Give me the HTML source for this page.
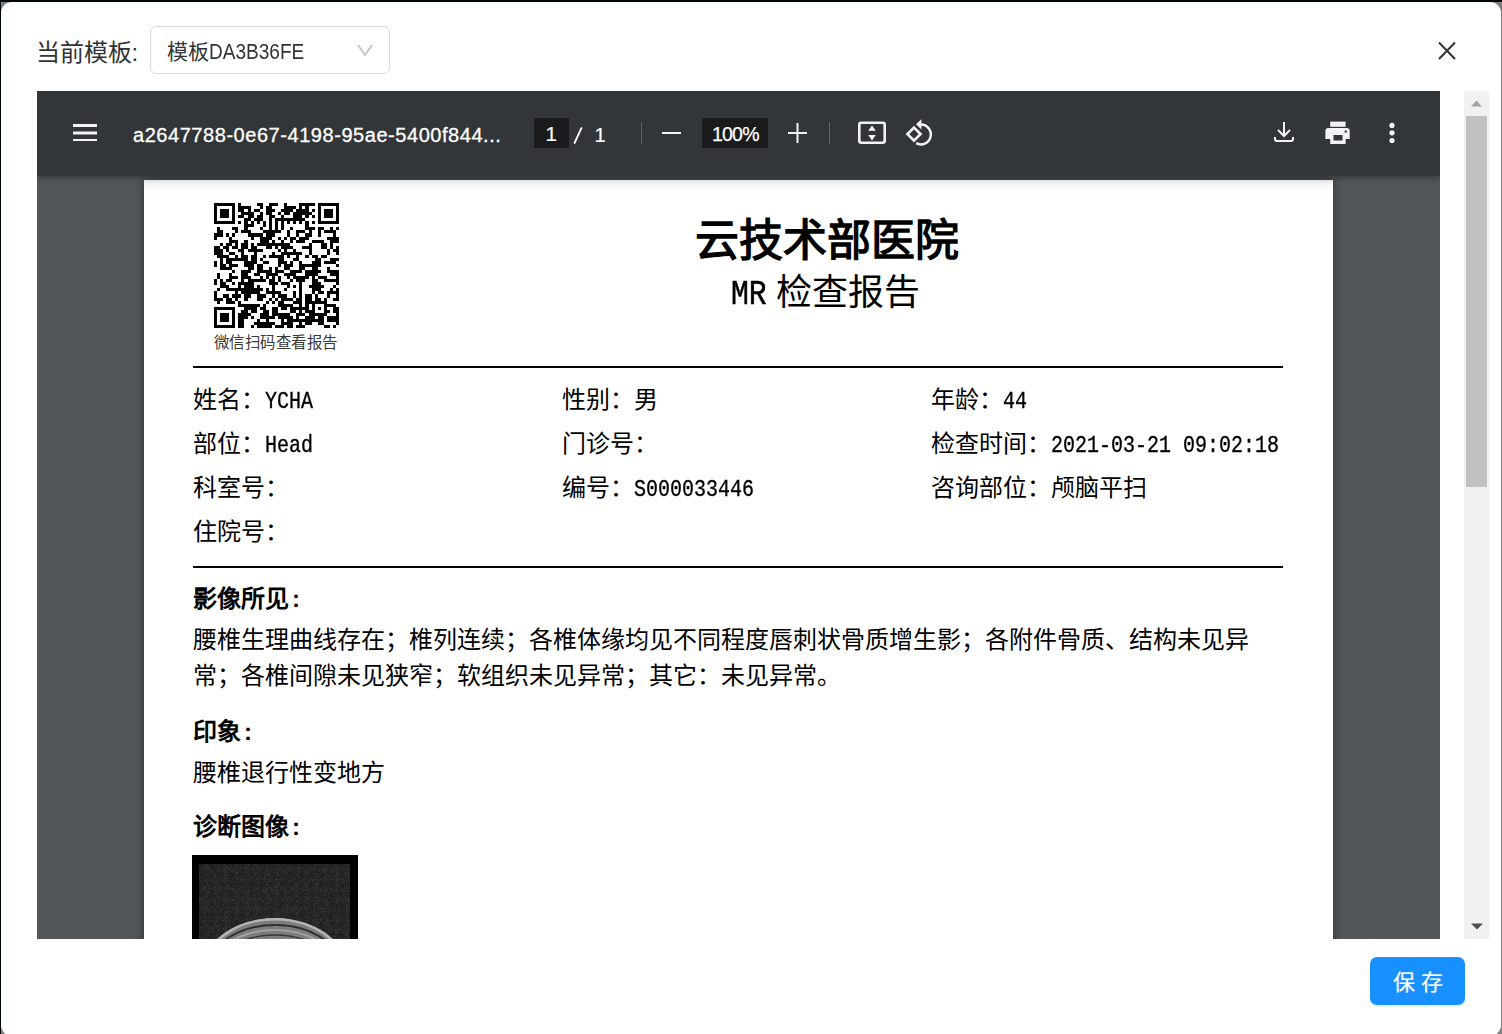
<!DOCTYPE html>
<html lang="zh-CN"><head><meta charset="utf-8">
<style>
*{margin:0;padding:0;box-sizing:border-box}
html,body{width:1502px;height:1034px;overflow:hidden}
body{background:#7f7f7f;font-family:"Liberation Sans",sans-serif;position:relative}
.abs{position:absolute}
#topstrip{left:0;top:0;width:1502px;height:1.5px;background:#00050f}
#leftstrip{left:0;top:0;width:1px;height:1034px;background:#00050f}
#modal{left:1px;top:2px;width:1500px;height:1034px;background:#fff;border-radius:11px}
#lbl{left:35.5px;top:34.5px;font-size:24px;line-height:36px;color:#333;white-space:nowrap}
#sel{left:150px;top:26px;width:240px;height:48px;border:1px solid #d9d9d9;border-radius:6px;background:#fff}
#seltxt{left:167px;top:36px;font-size:21px;line-height:32px;color:#333;white-space:nowrap}
#seltxt .lat{display:inline-block;font-size:22px;transform:scaleX(.865);transform-origin:0 50%;vertical-align:top;margin-top:0px}
#close{left:1436px;top:39px}
#viewer{left:37px;top:91px;width:1403px;height:848px;background:#525659;overflow:hidden}
#toolbar{left:0;top:0;width:1403px;height:84.5px;background:#323639;box-shadow:0 2px 6px rgba(0,0,0,.35);z-index:2}
#pshade{left:107px;top:89px;width:1189px;height:14px;background:linear-gradient(rgba(0,0,0,.055),rgba(0,0,0,0));z-index:1}
#page{left:107px;top:89px;width:1189px;height:1600px;background:#fff;box-shadow:0 0 8px rgba(0,0,0,.45)}
#scroll{left:1464px;top:91px;width:25px;height:848px;background:#f1f1f1}
#thumb{left:2px;top:25px;width:21px;height:371px;background:#c1c1c1}
#save{left:1370px;top:957px;width:95px;height:48px;background:#1890ff;border-radius:7px;color:#fff;font-size:22px;line-height:48px;text-align:center;padding-left:1px;padding-top:1.5px;-webkit-text-stroke:.2px #fff;box-shadow:0 2px 0 rgba(5,145,255,.1)}
.tbtxt{color:#fff;white-space:nowrap}
.doc{color:#000;white-space:nowrap}
.info{font-size:24px;line-height:34px}
.m{display:inline-block;font-family:"Liberation Mono",monospace;transform:scaleX(.833);transform-origin:0 50%;-webkit-text-stroke:.35px #000}
.m2{display:inline-block;font-family:"Liberation Mono",monospace;transform:scaleX(.85);transform-origin:0 50%;-webkit-text-stroke:.5px #000}
.hd{font-size:24px;line-height:34px;font-weight:bold}
.col{margin-left:3px}
.bd{font-size:24px;line-height:34px}
</style></head><body>
<div id="topstrip" class="abs"></div>
<div id="leftstrip" class="abs"></div>
<div id="modal" class="abs"></div>
<div id="lbl" class="abs">当前模板:</div>
<div id="sel" class="abs"></div>
<div id="seltxt" class="abs">模板<span class="lat">DA3B36FE</span></div>
<svg class="abs" style="left:356px;top:41.5px" width="18" height="16" viewBox="0 0 18 16"><path d="M2 3 L9 13 L16 3" fill="none" stroke="#bfbfbf" stroke-width="1.6"/></svg>
<svg id="close" class="abs" width="22" height="24" viewBox="0 0 22 24"><path d="M3 3.5 L19 20 M19 3.5 L3 20" stroke="#333" stroke-width="2" fill="none"/></svg>

<div id="viewer" class="abs">
  <div id="page" class="abs">
    <div class="abs" style="left:70px;top:23px;width:125px;height:125px"><svg width="125" height="125" viewBox="0 0 41 41" shape-rendering="crispEdges"><path d="M0 0h7v1h-7zM8 0h1v1h-1zM14 0h2v1h-2zM18 0h3v1h-3zM23 0h1v1h-1zM28 0h5v1h-5zM34 0h7v1h-7zM0 1h1v1h-1zM6 1h1v1h-1zM8 1h4v1h-4zM15 1h1v1h-1zM17 1h2v1h-2zM23 1h4v1h-4zM28 1h1v1h-1zM30 1h1v1h-1zM34 1h1v1h-1zM40 1h1v1h-1zM0 2h1v1h-1zM2 2h3v1h-3zM6 2h1v1h-1zM8 2h2v1h-2zM11 2h1v1h-1zM13 2h2v1h-2zM17 2h3v1h-3zM22 2h4v1h-4zM27 2h4v1h-4zM32 2h1v1h-1zM34 2h1v1h-1zM36 2h3v1h-3zM40 2h1v1h-1zM0 3h1v1h-1zM2 3h3v1h-3zM6 3h1v1h-1zM9 3h4v1h-4zM15 3h1v1h-1zM17 3h2v1h-2zM21 3h1v1h-1zM23 3h2v1h-2zM26 3h6v1h-6zM34 3h1v1h-1zM36 3h3v1h-3zM40 3h1v1h-1zM0 4h1v1h-1zM2 4h3v1h-3zM6 4h1v1h-1zM8 4h2v1h-2zM11 4h2v1h-2zM14 4h2v1h-2zM18 4h2v1h-2zM22 4h1v1h-1zM26 4h3v1h-3zM30 4h1v1h-1zM32 4h1v1h-1zM34 4h1v1h-1zM36 4h3v1h-3zM40 4h1v1h-1zM0 5h1v1h-1zM6 5h1v1h-1zM10 5h2v1h-2zM13 5h3v1h-3zM18 5h1v1h-1zM20 5h10v1h-10zM34 5h1v1h-1zM40 5h1v1h-1zM0 6h7v1h-7zM8 6h1v1h-1zM10 6h1v1h-1zM12 6h1v1h-1zM14 6h1v1h-1zM16 6h1v1h-1zM18 6h1v1h-1zM20 6h1v1h-1zM22 6h1v1h-1zM24 6h1v1h-1zM26 6h1v1h-1zM28 6h1v1h-1zM30 6h1v1h-1zM32 6h1v1h-1zM34 6h7v1h-7zM10 7h3v1h-3zM16 7h1v1h-1zM18 7h1v1h-1zM20 7h1v1h-1zM22 7h1v1h-1zM30 7h1v1h-1zM1 8h1v1h-1zM6 8h2v1h-2zM10 8h1v1h-1zM15 8h1v1h-1zM18 8h1v1h-1zM20 8h1v1h-1zM22 8h1v1h-1zM25 8h1v1h-1zM30 8h3v1h-3zM34 8h2v1h-2zM38 8h1v1h-1zM40 8h1v1h-1zM1 9h2v1h-2zM7 9h1v1h-1zM9 9h3v1h-3zM16 9h6v1h-6zM24 9h1v1h-1zM27 9h3v1h-3zM31 9h1v1h-1zM34 9h1v1h-1zM36 9h4v1h-4zM0 10h3v1h-3zM4 10h1v1h-1zM6 10h1v1h-1zM11 10h5v1h-5zM17 10h3v1h-3zM24 10h1v1h-1zM27 10h1v1h-1zM30 10h2v1h-2zM34 10h1v1h-1zM39 10h1v1h-1zM0 11h1v1h-1zM5 11h1v1h-1zM12 11h1v1h-1zM15 11h4v1h-4zM21 11h1v1h-1zM23 11h1v1h-1zM25 11h2v1h-2zM28 11h3v1h-3zM37 11h4v1h-4zM5 12h3v1h-3zM10 12h1v1h-1zM15 12h3v1h-3zM19 12h1v1h-1zM22 12h1v1h-1zM25 12h1v1h-1zM27 12h3v1h-3zM32 12h4v1h-4zM38 12h3v1h-3zM2 13h1v1h-1zM4 13h2v1h-2zM7 13h1v1h-1zM9 13h2v1h-2zM12 13h1v1h-1zM14 13h11v1h-11zM31 13h1v1h-1zM35 13h2v1h-2zM38 13h1v1h-1zM0 14h2v1h-2zM3 14h2v1h-2zM6 14h2v1h-2zM9 14h2v1h-2zM12 14h2v1h-2zM17 14h2v1h-2zM20 14h1v1h-1zM22 14h4v1h-4zM29 14h3v1h-3zM35 14h2v1h-2zM38 14h1v1h-1zM40 14h1v1h-1zM0 15h3v1h-3zM4 15h1v1h-1zM8 15h2v1h-2zM11 15h5v1h-5zM21 15h1v1h-1zM23 15h1v1h-1zM26 15h1v1h-1zM31 15h1v1h-1zM37 15h1v1h-1zM39 15h2v1h-2zM0 16h3v1h-3zM5 16h2v1h-2zM9 16h1v1h-1zM13 16h1v1h-1zM19 16h1v1h-1zM22 16h7v1h-7zM31 16h1v1h-1zM37 16h1v1h-1zM40 16h1v1h-1zM1 17h4v1h-4zM7 17h1v1h-1zM9 17h2v1h-2zM12 17h2v1h-2zM16 17h1v1h-1zM18 17h5v1h-5zM24 17h1v1h-1zM27 17h1v1h-1zM30 17h1v1h-1zM32 17h2v1h-2zM35 17h2v1h-2zM2 18h1v1h-1zM4 18h7v1h-7zM12 18h2v1h-2zM15 18h1v1h-1zM21 18h2v1h-2zM26 18h2v1h-2zM33 18h2v1h-2zM38 18h3v1h-3zM0 19h1v1h-1zM2 19h1v1h-1zM4 19h2v1h-2zM10 19h4v1h-4zM16 19h2v1h-2zM21 19h3v1h-3zM25 19h1v1h-1zM28 19h1v1h-1zM32 19h3v1h-3zM36 19h4v1h-4zM0 20h1v1h-1zM2 20h2v1h-2zM5 20h3v1h-3zM10 20h3v1h-3zM14 20h2v1h-2zM21 20h1v1h-1zM23 20h3v1h-3zM28 20h7v1h-7zM40 20h1v1h-1zM2 21h4v1h-4zM11 21h2v1h-2zM14 21h2v1h-2zM18 21h1v1h-1zM20 21h1v1h-1zM23 21h2v1h-2zM28 21h2v1h-2zM32 21h2v1h-2zM37 21h1v1h-1zM6 22h1v1h-1zM9 22h3v1h-3zM14 22h5v1h-5zM20 22h3v1h-3zM25 22h4v1h-4zM30 22h5v1h-5zM37 22h4v1h-4zM1 23h1v1h-1zM5 23h1v1h-1zM9 23h2v1h-2zM13 23h2v1h-2zM17 23h4v1h-4zM23 23h4v1h-4zM30 23h4v1h-4zM38 23h3v1h-3zM1 24h1v1h-1zM5 24h3v1h-3zM9 24h3v1h-3zM15 24h1v1h-1zM17 24h1v1h-1zM19 24h1v1h-1zM21 24h1v1h-1zM24 24h1v1h-1zM26 24h5v1h-5zM32 24h1v1h-1zM34 24h3v1h-3zM40 24h1v1h-1zM0 25h1v1h-1zM2 25h1v1h-1zM4 25h2v1h-2zM9 25h1v1h-1zM11 25h6v1h-6zM18 25h2v1h-2zM21 25h1v1h-1zM25 25h1v1h-1zM27 25h3v1h-3zM32 25h2v1h-2zM36 25h5v1h-5zM0 26h1v1h-1zM2 26h2v1h-2zM6 26h1v1h-1zM8 26h5v1h-5zM18 26h3v1h-3zM22 26h3v1h-3zM28 26h1v1h-1zM32 26h3v1h-3zM40 26h1v1h-1zM2 27h3v1h-3zM8 27h1v1h-1zM10 27h3v1h-3zM14 27h1v1h-1zM19 27h1v1h-1zM24 27h1v1h-1zM26 27h1v1h-1zM28 27h1v1h-1zM31 27h5v1h-5zM39 27h1v1h-1zM1 28h1v1h-1zM4 28h12v1h-12zM17 28h1v1h-1zM19 28h1v1h-1zM23 28h1v1h-1zM28 28h1v1h-1zM32 28h3v1h-3zM38 28h1v1h-1zM40 28h1v1h-1zM0 29h1v1h-1zM7 29h1v1h-1zM9 29h6v1h-6zM17 29h5v1h-5zM26 29h1v1h-1zM28 29h1v1h-1zM32 29h1v1h-1zM34 29h2v1h-2zM37 29h4v1h-4zM0 30h1v1h-1zM3 30h2v1h-2zM6 30h3v1h-3zM10 30h2v1h-2zM14 30h3v1h-3zM19 30h1v1h-1zM21 30h3v1h-3zM26 30h1v1h-1zM28 30h1v1h-1zM30 30h2v1h-2zM33 30h1v1h-1zM37 30h1v1h-1zM40 30h1v1h-1zM0 31h3v1h-3zM4 31h2v1h-2zM7 31h1v1h-1zM10 31h1v1h-1zM14 31h2v1h-2zM18 31h1v1h-1zM20 31h1v1h-1zM22 31h4v1h-4zM27 31h2v1h-2zM30 31h2v1h-2zM33 31h2v1h-2zM36 31h1v1h-1zM39 31h2v1h-2zM1 32h1v1h-1zM4 32h3v1h-3zM8 32h1v1h-1zM17 32h1v1h-1zM19 32h1v1h-1zM21 32h2v1h-2zM26 32h3v1h-3zM30 32h7v1h-7zM8 33h7v1h-7zM16 33h1v1h-1zM21 33h5v1h-5zM28 33h1v1h-1zM30 33h1v1h-1zM32 33h1v1h-1zM36 33h4v1h-4zM0 34h7v1h-7zM10 34h4v1h-4zM15 34h2v1h-2zM19 34h2v1h-2zM22 34h2v1h-2zM25 34h6v1h-6zM32 34h1v1h-1zM34 34h1v1h-1zM36 34h1v1h-1zM39 34h2v1h-2zM0 35h1v1h-1zM6 35h1v1h-1zM9 35h2v1h-2zM12 35h2v1h-2zM16 35h2v1h-2zM19 35h2v1h-2zM25 35h2v1h-2zM28 35h1v1h-1zM30 35h3v1h-3zM36 35h2v1h-2zM39 35h2v1h-2zM0 36h1v1h-1zM2 36h3v1h-3zM6 36h1v1h-1zM8 36h4v1h-4zM15 36h3v1h-3zM19 36h6v1h-6zM27 36h3v1h-3zM31 36h6v1h-6zM40 36h1v1h-1zM0 37h1v1h-1zM2 37h3v1h-3zM6 37h1v1h-1zM8 37h3v1h-3zM12 37h1v1h-1zM15 37h5v1h-5zM21 37h5v1h-5zM27 37h1v1h-1zM30 37h3v1h-3zM34 37h2v1h-2zM37 37h4v1h-4zM0 38h1v1h-1zM2 38h3v1h-3zM6 38h1v1h-1zM8 38h2v1h-2zM14 38h1v1h-1zM17 38h1v1h-1zM22 38h1v1h-1zM24 38h12v1h-12zM37 38h4v1h-4zM0 39h1v1h-1zM6 39h1v1h-1zM8 39h2v1h-2zM13 39h7v1h-7zM22 39h4v1h-4zM28 39h1v1h-1zM30 39h2v1h-2zM34 39h2v1h-2zM40 39h1v1h-1zM0 40h7v1h-7zM8 40h2v1h-2zM12 40h1v1h-1zM14 40h5v1h-5zM20 40h3v1h-3zM24 40h2v1h-2zM27 40h3v1h-3zM36 40h2v1h-2zM39 40h1v1h-1z" fill="#000"/></svg></div>
    <div class="abs doc" style="left:69.5px;top:150.5px;font-size:15.5px;line-height:24px;letter-spacing:-.45px;color:#3a3a3a">微信扫码查看报告</div>
    <div class="abs doc" style="left:551px;top:33px;font-size:44px;line-height:56px;font-weight:bold">云技术部医院</div>
    <div class="abs doc" style="left:587px;top:90px;font-size:35px;line-height:44px"><span class="m2">MR</span><span style="position:absolute;left:45px;top:1px;font-size:36px">检查报告</span></div>
    <div class="abs" style="left:49px;top:186px;width:1090px;height:2px;background:#000"></div>
    <div class="abs doc info" style="left:49px;top:202.5px">姓名：<span class="m">YCHA</span></div>
    <div class="abs doc info" style="left:418px;top:202.5px">性别：男</div>
    <div class="abs doc info" style="left:787px;top:202.5px">年龄：<span class="m">44</span></div>
    <div class="abs doc info" style="left:49px;top:246.5px">部位：<span class="m">Head</span></div>
    <div class="abs doc info" style="left:418px;top:246.5px">门诊号：</div>
    <div class="abs doc info" style="left:787px;top:246.5px">检查时间：<span class="m">2021-03-21 09:02:18</span></div>
    <div class="abs doc info" style="left:49px;top:290.5px">科室号：</div>
    <div class="abs doc info" style="left:418px;top:290.5px">编号：<span class="m">S000033446</span></div>
    <div class="abs doc info" style="left:787px;top:290.5px">咨询部位：颅脑平扫</div>
    <div class="abs doc info" style="left:49px;top:334.5px">住院号：</div>
    <div class="abs" style="left:49px;top:386px;width:1090px;height:2px;background:#000"></div>
    <div class="abs doc hd" style="left:49px;top:401.5px">影像所见<span class="col">:</span></div>
    <div class="abs doc bd" style="left:49px;top:443px">腰椎生理曲线存在；椎列连续；各椎体缘均见不同程度唇刺状骨质增生影；各附件骨质、结构未见异</div>
    <div class="abs doc bd" style="left:49px;top:479px">常；各椎间隙未见狭窄；软组织未见异常；其它：未见异常。</div>
    <div class="abs doc hd" style="left:49px;top:535px">印象<span class="col">:</span></div>
    <div class="abs doc bd" style="left:49px;top:576px">腰椎退行性变地方</div>
    <div class="abs doc hd" style="left:49px;top:630px">诊断图像<span class="col">:</span></div>
    <div class="abs" style="left:48px;top:675px;width:166px;height:120px;background:#000;overflow:hidden">
      <svg width="166" height="120" viewBox="0 0 166 120">
        <defs>
          <filter id="nz" x="0" y="0" width="100%" height="100%"><feTurbulence type="turbulence" baseFrequency="1.1" numOctaves="1" seed="3"/><feColorMatrix type="matrix" values="0 0 0 0 0.5  0 0 0 0 0.5  0 0 0 0 0.5  0 0 0 0.55 0"/></filter>
          <clipPath id="cp"><ellipse cx="83" cy="123" rx="76" ry="60"/></clipPath>
        </defs>
        <rect x="7" y="9" width="151" height="111" fill="#1e1e1e"/>
        <rect x="7" y="9" width="151" height="111" filter="url(#nz)" opacity=".6"/>
        <g clip-path="url(#cp)">
          <rect x="0" y="60" width="166" height="60" fill="#7a7a7a"/>
          <ellipse cx="83" cy="123" rx="76" ry="60" fill="none" stroke="#b5b5b5" stroke-width="5"/>
          <ellipse cx="83" cy="127" rx="74" ry="57" fill="none" stroke="#2a2a2a" stroke-width="2"/>
          <ellipse cx="83" cy="130" rx="72" ry="55" fill="none" stroke="#a0a0a0" stroke-width="2"/>
          <ellipse cx="83" cy="133" rx="70" ry="53" fill="none" stroke="#333" stroke-width="1.5"/>
          <ellipse cx="83" cy="137" rx="68" ry="52" fill="none" stroke="#999" stroke-width="2"/>
          <rect x="0" y="60" width="166" height="60" filter="url(#nz)" opacity=".5"/>
        </g>
      </svg>
    </div>
  </div>
  <div id="pshade" class="abs"></div>
  <div id="toolbar" class="abs">
    <svg class="abs" style="left:35px;top:32px" width="26" height="18" viewBox="0 0 26 18"><path d="M1 1h24v3H1zM1 8.5h24v3H1zM1 16h24v3H1z" fill="#f1f3f4"/></svg>
    <div class="abs tbtxt" id="fname" style="left:96px;top:29.5px;font-size:20px;line-height:28px;letter-spacing:.55px;-webkit-text-stroke:.3px #fff">a2647788-0e67-4198-95ae-5400f844...</div>
    <div class="abs" style="left:497px;top:27px;width:35px;height:30px;background:#191b1c"></div>
    <div class="abs tbtxt" style="left:508.5px;top:29px;font-size:20.5px;line-height:28px;-webkit-text-stroke:.2px #fff">1</div>
    <svg class="abs" style="left:536px;top:36px" width="10" height="17" viewBox="0 0 10 17"><path d="M1.6 15.8 L8.4 1.2" stroke="#fff" stroke-width="1.9" stroke-linecap="round"/></svg>
    <div class="abs tbtxt" style="left:557.5px;top:30px;font-size:20px;line-height:28px;-webkit-text-stroke:.2px #fff">1</div>
    <div class="abs" style="left:604px;top:31px;width:1px;height:22px;background:#5f6368"></div>
    <div class="abs" style="left:625px;top:41px;width:19px;height:2px;background:#f1f3f4"></div>
    <div class="abs" style="left:665px;top:27px;width:66px;height:30px;background:#191b1c"></div>
    <div class="abs tbtxt" style="left:675px;top:29px;font-size:19.5px;line-height:28px;letter-spacing:-.8px;-webkit-text-stroke:.25px #fff">100%</div>
    <svg class="abs" style="left:751px;top:32px" width="19" height="20" viewBox="0 0 19 20"><path d="M8.5 0h2v20h-2zM0 9h19v2H0z" fill="#f1f3f4"/></svg>
    <div class="abs" style="left:792px;top:31px;width:1px;height:22px;background:#5f6368"></div>
    <svg class="abs" style="left:820px;top:30px" width="30" height="24" viewBox="0 0 30 24"><rect x="2.3" y="1.8" width="25.4" height="20" rx="2" fill="none" stroke="#f1f3f4" stroke-width="2.6"/><path d="M11.2 9.8 L15 4.5 L18.8 9.8z M11.2 14 L15 19.5 L18.8 14z" fill="#f1f3f4"/></svg>
    <svg class="abs" style="left:867px;top:26px" width="34" height="32" viewBox="0 0 34 32"><path d="M10 10.6 L16.5 17.1 L10 23.6 L3.5 17.1z" fill="none" stroke="#f1f3f4" stroke-width="2.7"/><path d="M17 7.6 A9.9 9.9 0 1 1 12.2 26.2" fill="none" stroke="#f1f3f4" stroke-width="2.5"/><path d="M12 7.3 L17.4 2.2 L17.4 12.4z" fill="#f1f3f4"/></svg>
    <svg class="abs" style="left:1236px;top:30px" width="22" height="22" viewBox="0 0 22 22"><path d="M11 1v14 M5 9l6 6 6-6" fill="none" stroke="#f1f3f4" stroke-width="2"/><path d="M2 16v2a2 2 0 0 0 2 2h14a2 2 0 0 0 2-2v-2" fill="none" stroke="#f1f3f4" stroke-width="2"/></svg>
    <svg class="abs" style="left:1287px;top:30px" width="28" height="24" viewBox="0 0 28 24"><path d="M6.2 0.6h15.4v5.2H6.2z" fill="#f1f3f4"/><path d="M4.4 7h18.6a3 3 0 0 1 2.7 3v8H21.6v5H6.2v-5H1.4v-8a3 3 0 0 1 3-3z" fill="#f1f3f4"/><rect x="9.5" y="14" width="9" height="5.5" fill="#323639"/><circle cx="21.8" cy="10.6" r="1.2" fill="#323639"/></svg>
    <svg class="abs" style="left:1347px;top:30px" width="16" height="24" viewBox="0 0 16 24"><circle cx="8" cy="4.4" r="2.6" fill="#f1f3f4"/><circle cx="8" cy="11.8" r="2.6" fill="#f1f3f4"/><circle cx="8" cy="19.5" r="2.6" fill="#f1f3f4"/></svg>
  </div>
</div>
<div id="scroll" class="abs"><div id="thumb" class="abs"></div><svg class="abs" style="left:7px;top:9px" width="11" height="7" viewBox="0 0 11 7"><path d="M0 6.5 L5.5 0.5 L11 6.5z" fill="#a3a3a3"/></svg><svg class="abs" style="left:6.5px;top:831.5px" width="12" height="7" viewBox="0 0 12 7"><path d="M0 0.5 L6 6.5 L12 0.5z" fill="#505050"/></svg></div>
<div id="save" class="abs">保 存</div>
</body></html>
